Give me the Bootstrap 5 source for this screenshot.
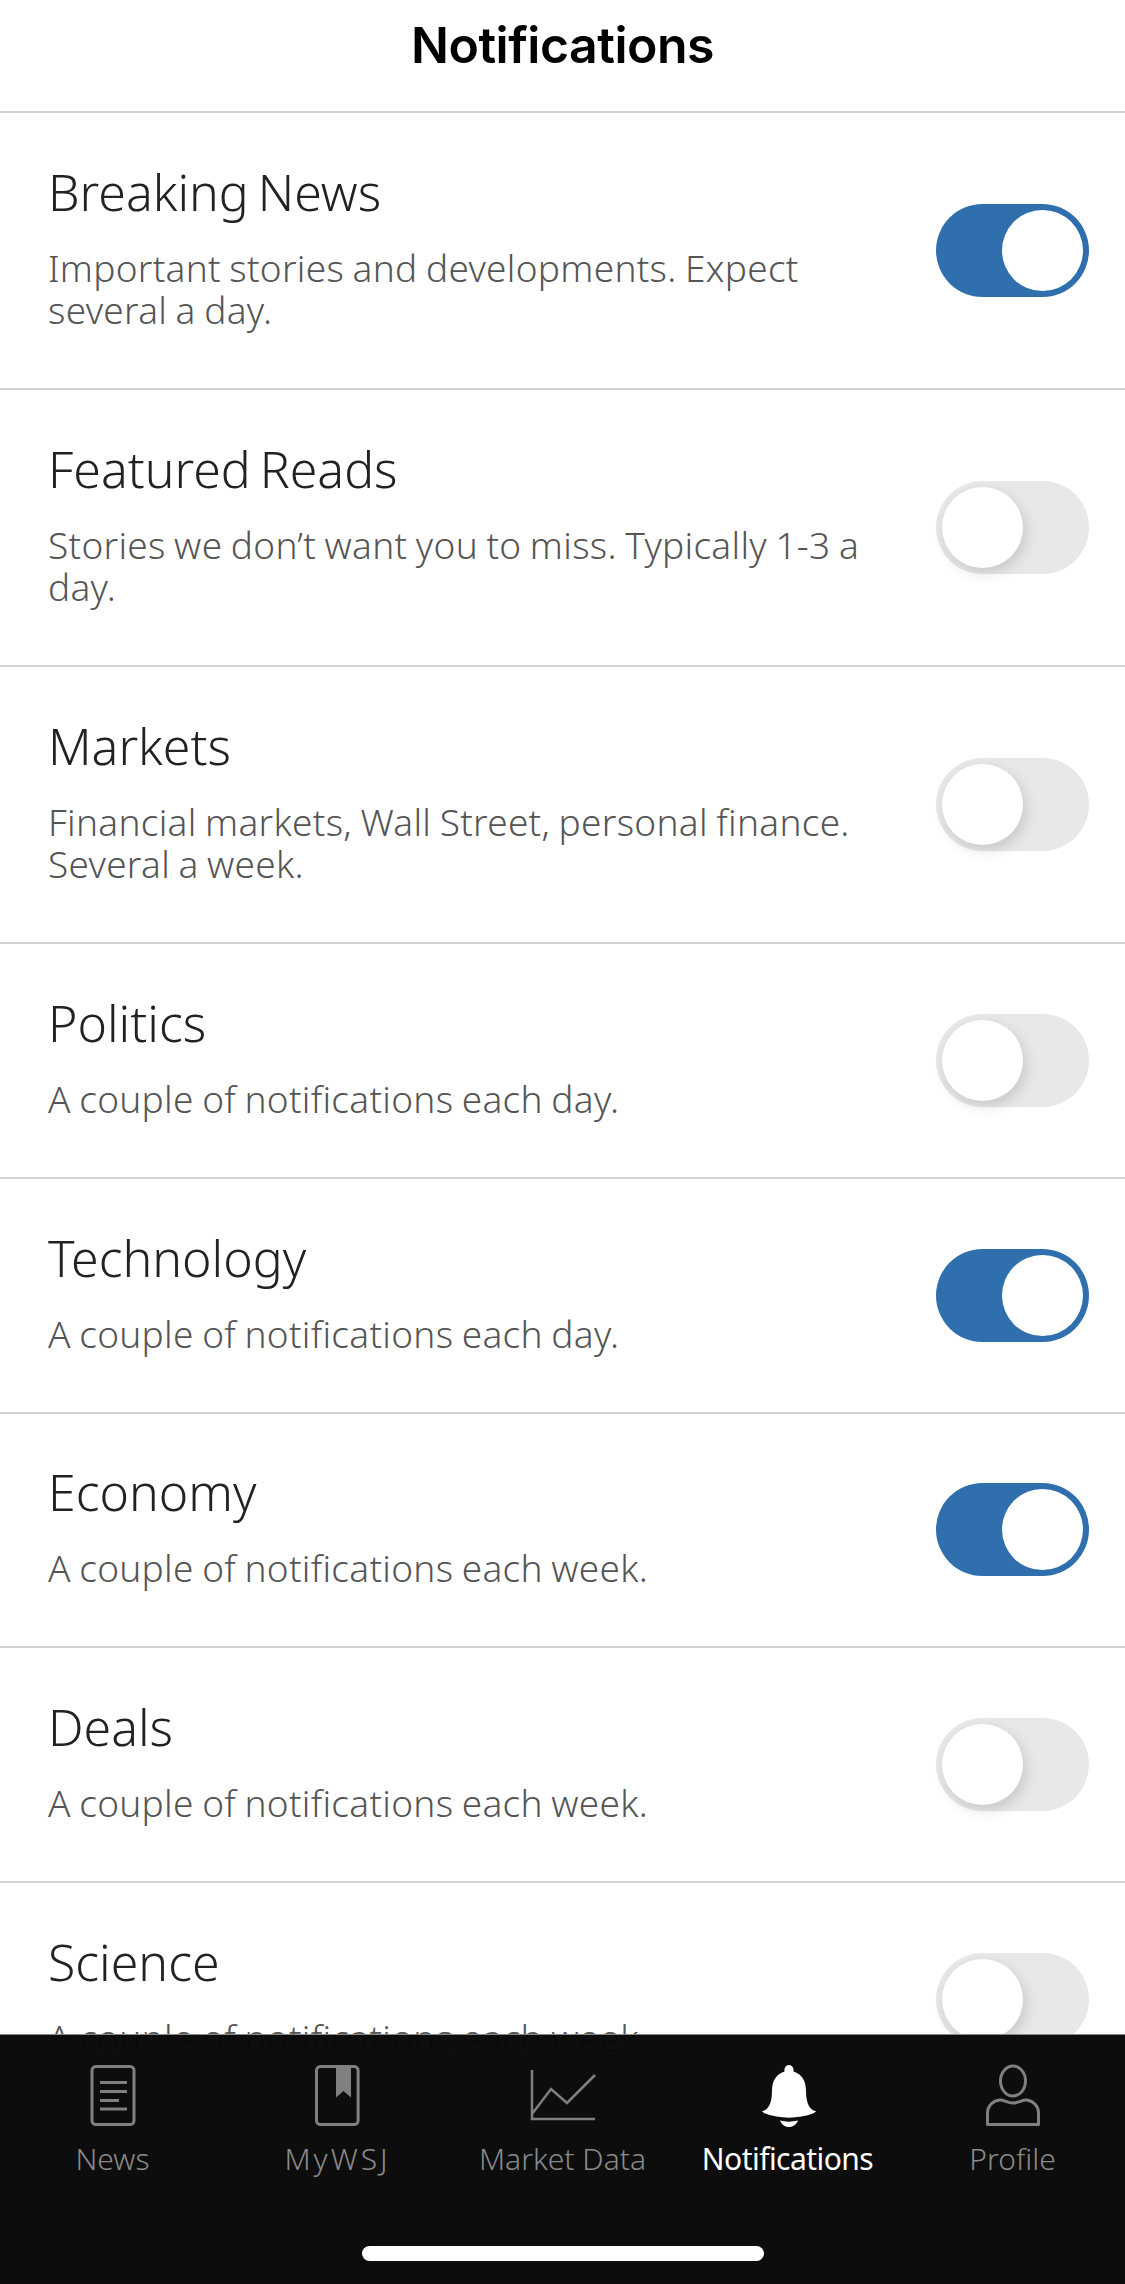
<!DOCTYPE html>
<html lang="en"><head><meta charset="utf-8"><title>Notifications</title>
<link href="https://cdn.jsdelivr.net/npm/bootstrap@5.3.0/dist/css/bootstrap.min.css" rel="stylesheet">
<style>
html,body{margin:0;background:#fff}
.phone{width:1125px;height:2284px;overflow:hidden;position:relative;background:#fff;font-family:"Noto Sans","Liberation Sans",sans-serif}
.topbar{height:113px;border-bottom:2px solid #d2d2d2;font-family:Inter,"Liberation Sans",sans-serif;font-weight:600;font-size:50px;color:#000;letter-spacing:-.5px;padding-bottom:20px}
.setrow{border-color:#d2d2d2!important;border-width:0 0 2px!important;padding:0 36px 0 48px!important;height:277px}
.setrow.one{height:234.75px}
.settxt{width:830px;padding-bottom:9px}
.sethead{font-size:50px;font-weight:300;color:#222;line-height:62px;margin-bottom:24px;word-spacing:-4px}
.setdesc{font-size:37px;font-weight:300;color:#555;line-height:42px;letter-spacing:.3px;word-spacing:-1.5px}
.wsw.form-check-input{appearance:none;width:153px;height:93px;border:0;border-radius:47px;background:#e8e8e8;position:relative;float:none;margin:0;box-shadow:none;flex:none}
.wsw.form-check-input:checked{background:#2f6fae}
.wsw::after{content:"";position:absolute;left:6px;top:6px;width:81px;height:81px;border-radius:50%;background:#fff;box-shadow:3px 5px 14px rgba(0,0,0,.14)}
.wsw:checked::after{left:66px;box-shadow:none}
.tabbar{position:absolute;left:0;right:0;bottom:0;height:250px;background:rgba(9,9,9,.985);border-top:1px solid #888}
.tabitem{width:225px;color:#8a8a8a;font-size:30px;font-weight:300;height:172px;padding-top:29px;text-decoration:none}
.tabitem.on{color:#fff;font-weight:400;letter-spacing:-.55px}
.tabico{display:block;width:80px;height:64px;margin-bottom:10px}
.tablbl{line-height:42px}
.wide{letter-spacing:3px}
.homebar{position:absolute;left:362px;top:211px;width:402px;height:15px;border-radius:8px;background:#fff}
</style></head><body>
<div class="phone d-flex flex-column">
<header class="topbar d-flex align-items-center justify-content-center">Notifications</header>
<div class="list-group list-group-flush">
<div class="list-group-item setrow d-flex align-items-center justify-content-between"><div class="settxt"><div class="sethead">Breaking News</div><div class="setdesc">Important stories and developments. Expect several a day.</div></div><input class="form-check-input wsw" type="checkbox" role="switch" checked aria-label="Breaking News"></div>
<div class="list-group-item setrow d-flex align-items-center justify-content-between"><div class="settxt"><div class="sethead">Featured Reads</div><div class="setdesc">Stories we don’t want you to miss. Typically 1-3 a day.</div></div><input class="form-check-input wsw" type="checkbox" role="switch" aria-label="Featured Reads"></div>
<div class="list-group-item setrow d-flex align-items-center justify-content-between"><div class="settxt"><div class="sethead">Markets</div><div class="setdesc">Financial markets, Wall Street, personal finance. Several a week.</div></div><input class="form-check-input wsw" type="checkbox" role="switch" aria-label="Markets"></div>
<div class="list-group-item setrow one d-flex align-items-center justify-content-between"><div class="settxt"><div class="sethead">Politics</div><div class="setdesc">A couple of notifications each day.</div></div><input class="form-check-input wsw" type="checkbox" role="switch" aria-label="Politics"></div>
<div class="list-group-item setrow one d-flex align-items-center justify-content-between"><div class="settxt"><div class="sethead">Technology</div><div class="setdesc">A couple of notifications each day.</div></div><input class="form-check-input wsw" type="checkbox" role="switch" checked aria-label="Technology"></div>
<div class="list-group-item setrow one d-flex align-items-center justify-content-between"><div class="settxt"><div class="sethead">Economy</div><div class="setdesc">A couple of notifications each week.</div></div><input class="form-check-input wsw" type="checkbox" role="switch" checked aria-label="Economy"></div>
<div class="list-group-item setrow one d-flex align-items-center justify-content-between"><div class="settxt"><div class="sethead">Deals</div><div class="setdesc">A couple of notifications each week.</div></div><input class="form-check-input wsw" type="checkbox" role="switch" aria-label="Deals"></div>
<div class="list-group-item setrow one d-flex align-items-center justify-content-between"><div class="settxt"><div class="sethead">Science</div><div class="setdesc">A couple of notifications each week.</div></div><input class="form-check-input wsw" type="checkbox" role="switch" aria-label="Science"></div>
</div>
<nav class="tabbar">
<div class="d-flex">
<a class="tabitem d-flex flex-column align-items-center" href="#"><svg class="tabico" viewBox="0 0 80 64"><g fill="none" stroke="#808080" stroke-width="3"><rect x="19" y="2.500" width="42" height="58" rx="4"/><path d="M27 18.500h27M27 27.500h27M27 36.500h19M27 45h27"/></g></svg><span class="tablbl">News</span></a>
<a class="tabitem d-flex flex-column align-items-center" href="#"><svg class="tabico" viewBox="0 0 80 64"><rect x="18.500" y="2.500" width="41.600" height="58" rx="4" fill="none" stroke="#808080" stroke-width="3"/><path d="M38 2.500h15v31l-7.500-6.500-7.500 6.500z" fill="#808080"/></svg><span class="tablbl wide">MyWSJ</span></a>
<a class="tabitem d-flex flex-column align-items-center" href="#"><svg class="tabico" viewBox="0 0 80 64"><path d="M9 6v49h63M9 50l19-25 16 14 28-28" fill="none" stroke="#808080" stroke-width="2.500"/></svg><span class="tablbl">Market Data</span></a>
<a class="tabitem on d-flex flex-column align-items-center" href="#"><svg class="tabico" viewBox="-1 0 80 64"><path d="M40 1a5 5 0 0 1 4.500 6.500C53 10 57 17 57 27c0 14 5 20 10 20-.500 1-1.500 1.800-3 2.500C50 55 30 55 16 49.500c-1.500-.7-2.500-1.500-3-2.500 5 0 10-6 10-20 0-10 4-17 12.500-19.500A5 5 0 0 1 40 1z" fill="#fff"/><path d="M31 56.500c6 1.500 12 1.500 18 0-1.500 4-5 6.500-9 6.500s-7.500-2.500-9-6.500z" fill="#fff"/></svg><span class="tablbl">Notifications</span></a>
<a class="tabitem d-flex flex-column align-items-center" href="#"><svg class="tabico" viewBox="0 0 80 64"><g fill="none" stroke="#808080" stroke-width="3"><ellipse cx="40" cy="17" rx="12.500" ry="15"/><path d="M14.500 60.500V49c0-7 5-12 12-13 4-.5 8 3 13.500 3s9.500-3.500 13.500-3c7 1 12 6 12 13v11.500z" stroke-linejoin="round"/></g></svg><span class="tablbl">Profile</span></a>
</div>
<div class="homebar"></div>
</nav>
</div>
<script src="https://cdn.jsdelivr.net/npm/bootstrap@5.3.0/dist/js/bootstrap.bundle.min.js"></script>
</body></html>
